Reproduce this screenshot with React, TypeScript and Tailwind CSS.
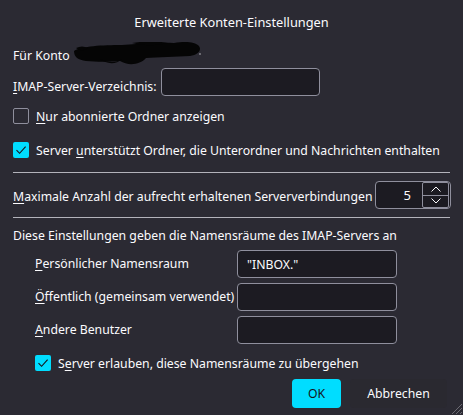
import React from "react";

const font = { fontFamily: '"Noto Sans", "Open Sans", sans-serif' };

function U({ children }: { children: React.ReactNode }) {
  return <span className="underline underline-offset-[2px] decoration-[1px]">{children}</span>;
}

function Check({ checked }: { checked?: boolean }) {
  if (checked) {
    return (
      <div className="w-[16px] h-[16px] rounded-[2px] bg-[#00ddff] flex items-center justify-center shrink-0">
        <svg width="16" height="16" viewBox="0 0 16 16">
          <path d="M3.5 8.2 L6.6 11.3 L12.6 4.6" fill="none" stroke="#15141a" strokeWidth="1.1" />
        </svg>
      </div>
    );
  }
  return <div className="w-[16px] h-[16px] rounded-[2px] border border-[#8f8f9d] bg-[#2b2a33] shrink-0" />;
}

function Field({ value, className }: { value?: string; className: string }) {
  return (
    <div
      className={`h-[28px] rounded-[4px] border border-[#8f8f9d] bg-[#1c1b22] flex items-center px-[9px] text-[#fbfbfe] shrink-0 ${className}`}
    >
      {value ? <span className="pt-[2px]">{value}</span> : null}
    </div>
  );
}

// scribbled-over account name
function Blot() {
  return (
    <svg width="128" height="24" viewBox="0 0 128 24" className="ml-[4px] mt-[4px] shrink-0">
      <g fill="#050505">
        <path d="M0 9 C8 4 28 3 48 3 C66 2 84 0 100 1 C112 -1 121 0 125 4 C128 8 124 13 116 14 C102 15 84 15 72 16 C66 23 54 24 46 19 C36 20 22 20 12 19 C4 18 0 15 0 9 Z" />
        <path d="M2 6 C6 4 10 4 14 6 C10 9 6 9 2 6 Z" />
        <path d="M58 1 C70 -1 84 -1 94 1 C82 4 70 4 58 1 Z" />
        <path d="M26 17 C34 21 42 21 48 17 C42 23 32 22 26 17 Z" />
      </g>
      <circle cx="126" cy="12" r="0.9" fill="#8a8a90" />
    </svg>
  );
}

export default function App() {
  return (
    <div
      className="w-[463px] h-[415px] bg-[#2b2a33] text-[#fbfbfe] text-[12.25px] relative overflow-hidden whitespace-nowrap"
      style={font}
    >
      <div className="h-[40px] pt-[6px] flex items-center justify-center text-[12.8px]">
        Erweiterte Konten-Einstellungen
      </div>

      <div className="h-[24px] flex items-center px-[13px]">
        <span className="pt-[9px]">Für Konto</span>
        <Blot />
      </div>

      <div className="mt-[4px] h-[28px] flex items-center px-[13px]">
        <span className="w-[148px] pt-[10px]">
          <U>I</U>MAP-Server-Verzeichnis:
        </span>
        <Field className="w-[159px]" />
      </div>

      <div className="mt-[12px] flex items-center px-[13px] gap-[7px] h-[16px]">
        <Check />
        <span className="pt-[2px]">
          <U>N</U>ur abonnierte Ordner anzeigen
        </span>
      </div>

      <div className="mt-[18px] flex items-center px-[13px] gap-[7px] h-[16px]">
        <Check checked />
        <span className="pt-[2px]">
          Server <U>u</U>nterstützt Ordner, die Unterordner und Nachrichten enthalten
        </span>
      </div>

      <div className="mx-[13px] mt-[14px] h-px bg-[#b3b3bb]" />

      <div className="mt-[8px] h-[28px] flex items-center px-[13px] justify-between">
        <span className="pt-[4px]">
          <U>M</U>aximale Anzahl der aufrecht erhaltenen Serververbindungen
        </span>
        <div className="w-[76px] h-[28px] rounded-[4px] border border-[#8f8f9d] bg-[#1c1b22] flex items-center mr-[-1px] shrink-0">
          <span className="flex-1 text-right pr-[11px] pt-[2px] text-[13px]">5</span>
          <div className="w-[27px] h-[26px] mr-[1px] border border-[#8f8f9d] rounded-[2px] flex flex-col">
            <div className="flex-1 flex items-center justify-center border-b border-[#8f8f9d]">
              <svg width="12" height="8" viewBox="0 0 12 8">
                <path d="M1.5 6.5 L6 2 L10.5 6.5" fill="none" stroke="#fbfbfe" strokeWidth="1" />
              </svg>
            </div>
            <div className="flex-1 flex items-center justify-center">
              <svg width="12" height="8" viewBox="0 0 12 8">
                <path d="M1.5 1.5 L6 6 L10.5 1.5" fill="none" stroke="#fbfbfe" strokeWidth="1" />
              </svg>
            </div>
          </div>
        </div>
      </div>

      <div className="mx-[13px] mt-[8px] h-px bg-[#b3b3bb]" />

      <div className="mt-[8px] px-[13px] h-[20px] flex items-center">
        Diese Einstellungen geben die Namensräume des IMAP-Servers an
      </div>

      <div className="mt-[4px] pl-[35px] flex flex-col gap-[5px]">
        <div className="flex items-center h-[28px]">
          <span className="w-[202px] pt-[1px]">
            <U>P</U>ersönlicher Namensraum
          </span>
          <Field value={'"INBOX."'} className="w-[160px]" />
        </div>
        <div className="flex items-center h-[28px]">
          <span className="w-[202px] pt-[1px]">
            <U>Ö</U>ffentlich (gemeinsam verwendet)
          </span>
          <Field className="w-[160px]" />
        </div>
        <div className="flex items-center h-[28px]">
          <span className="w-[202px] pt-[1px]">
            <U>A</U>ndere Benutzer
          </span>
          <Field className="w-[160px]" />
        </div>
      </div>

      <div className="mt-[11px] flex items-center pl-[35px] gap-[7px] h-[16px]">
        <Check checked />
        <span className="pt-[2px]">
          S<U>e</U>rver erlauben, diese Namensräume zu übergehen
        </span>
      </div>

      <div className="mt-[8px] flex justify-end pr-[16px] gap-[9px]">
        <div className="w-[49px] h-[29px] rounded-[4px] bg-[#00ddff] text-[#15141a] flex items-center justify-center pt-[2px]">
          OK
        </div>
        <div className="w-[97px] h-[29px] rounded-[4px] bg-[#2a2930] flex items-center justify-center pt-[2px]">
          Abbrechen
        </div>
      </div>

      <svg className="absolute right-0 bottom-0" width="14" height="14" viewBox="0 0 14 14">
        <path d="M13 3 L3 13 M13 7 L7 13 M13 11 L11 13" stroke="#6b6a72" strokeWidth="1" />
      </svg>
    </div>
  );
}
